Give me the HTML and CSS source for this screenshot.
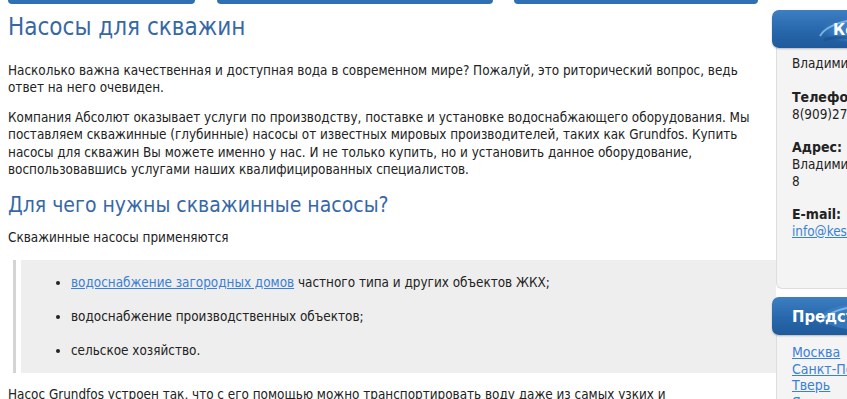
FILE: index.html
```html
<!DOCTYPE html>
<html lang="ru">
<head>
<meta charset="utf-8">
<title>Насосы для скважин</title>
<link rel="stylesheet" href="styles.css">
</head>
<body>
<div class="page">
  <main class="main">
    <nav class="tabs">
      <span class="tab tab-1"></span>
      <span class="tab tab-2"></span>
      <span class="tab tab-3"></span>
    </nav>
    <h1 class="title">Насосы для скважин</h1>
    <p class="text">Насколько важна качественная и доступная вода в современном мире? Пожалуй, это риторический вопрос, ведь ответ на него очевиден.</p>
    <p class="text">Компания Абсолют оказывает услуги по производству, поставке и установке водоснабжающего оборудования. Мы поставляем скважинные (глубинные) насосы от известных мировых производителей, таких как Grundfos. Купить насосы для скважин Вы можете именно у нас. И не только купить, но и установить данное оборудование, воспользовавшись услугами наших квалифицированных специалистов.</p>
    <h2 class="subtitle">Для чего нужны скважинные насосы?</h2>
    <p class="text">Скважинные насосы применяются</p>
    <blockquote class="quote">
      <ul class="quote-list">
        <li><a href="#" class="link">водоснабжение загородных домов</a> частного типа и других объектов ЖКХ;</li>
        <li>водоснабжение производственных объектов;</li>
        <li>сельское хозяйство.</li>
      </ul>
    </blockquote>
    <p class="text">Насос Grundfos устроен так, что с его помощью можно транспортировать воду даже из самых узких и труднодоступных скважин.</p>
  </main>
  <aside class="sidebar">
    <section class="widget">
      <div class="widget-head">
        <svg class="swoosh" width="90" height="38" viewBox="0 0 90 38" aria-hidden="true">
          <defs>
            <radialGradient id="sw1" cx="0.55" cy="0.5" r="0.6">
              <stop offset="0" stop-color="#2a6cb0"/>
              <stop offset="0.6" stop-color="#3f86c8"/>
              <stop offset="1" stop-color="#2a6cb0" stop-opacity="0"/>
            </radialGradient>
          </defs>
          <ellipse cx="52" cy="20" rx="40" ry="13" fill="url(#sw1)"/>
          <path d="M10 26 C 20 8, 70 4, 92 12" stroke="#8fc0ea" stroke-width="2" fill="none" opacity="0.8"/>
          <path d="M14 30 C 30 24, 60 30, 92 26" stroke="#1a4f8c" stroke-width="3" fill="none" opacity="0.6"/>
        </svg>
        <span class="widget-title widget-title-contacts">Контакты</span>
      </div>
      <div class="widget-body contacts">
        <p class="info">Владимир</p>
        <p class="info"><b class="label">Телефон:</b><br>8(909)270-00-00</p>
        <p class="info"><b class="label">Адрес:</b><br>Владимир, ул. Большая,<br>8</p>
        <p class="info"><b class="label">E-mail:</b><br><a href="#" class="link">info@kesson.ru</a></p>
      </div>
    </section>
    <section class="widget widget-2">
      <div class="widget-head">
        <svg class="swoosh" width="90" height="38" viewBox="0 0 90 38" aria-hidden="true">
          <ellipse cx="52" cy="20" rx="40" ry="13" fill="#3f86c8" opacity="0.6"/>
          <path d="M10 26 C 20 8, 70 4, 92 12" stroke="#8fc0ea" stroke-width="2" fill="none" opacity="0.8"/>
        </svg>
        <span class="widget-title">Представительства</span>
      </div>
      <div class="widget-body links">
        <a href="#" class="link">Москва</a>
        <a href="#" class="link">Санкт-Петербург</a>
        <a href="#" class="link">Тверь</a>
        <a href="#" class="link">Ярославль</a>
      </div>
    </section>
  </aside>
</div>
</body>
</html>
```

FILE: styles.css
```css
html, body {
  margin: 0;
  padding: 0;
  overflow: hidden;
  background: #ffffff;
}

body {
  font-family: "DejaVu Sans Condensed", "DejaVu Sans", sans-serif;
  font-size: 13.4px;
  color: #222222;
}

.page {
  display: flex;
  align-items: flex-start;
  width: 1100px;
}

.main {
  width: 768px;
  padding-left: 8px;
  flex: none;
}

.tabs {
  display: flex;
  height: 4px;
}

.tab {
  display: block;
  height: 4px;
  background: #2f6fb3;
  border-radius: 0 0 4px 4px;
}

.tab-1 { width: 187px; }
.tab-2 { width: 276px; margin-left: 22px; }
.tab-3 { width: 244px; margin-left: 21px; }

.title {
  margin: 8px 0 0;
  font-size: 24px;
  line-height: 30px;
  font-weight: normal;
  color: #3768a6;
}

.subtitle {
  margin: 14px 0 0;
  font-size: 21px;
  line-height: 26px;
  font-weight: normal;
  color: #3768a6;
}

.text {
  margin: 21px 0 0;
  line-height: 17.4px;
}

.title + .text { margin-top: 20px; }
.text + .text { margin-top: 12px; }
.subtitle + .text { margin-top: 11px; }

.quote {
  margin: 13px 0 0 5px;
  padding: 0 0 0 5px;
  border-left: 3px solid #d4d4d4;
}

.quote-list {
  margin: 0;
  padding: 14px 0 14px 50px;
  background: #eeeeee;
  list-style: disc;
}

.quote-list li {
  line-height: 17px;
}

.quote-list li + li {
  margin-top: 17px;
}

.quote + .text { margin-top: 13px; }

.link {
  color: #3a80d4;
  text-decoration: underline;
}

.sidebar {
  width: 220px;
  flex: none;
  margin-left: -4px;
  margin-top: 10px;
}

.widget-head {
  position: relative;
  height: 38px;
  border-radius: 7px;
  background: linear-gradient(180deg, #3d7fc2 0%, #2767ab 55%, #1f5a9b 100%);
  box-shadow: 0 1px 2px rgba(0, 0, 0, 0.25);
  display: flex;
  align-items: center;
  overflow: hidden;
}

.swoosh {
  position: absolute;
  left: 38px;
  top: 0;
}

.widget-title {
  position: relative;
  color: #ffffff;
  font-weight: bold;
  font-size: 16.5px;
  padding-left: 20px;
  white-space: nowrap;
}

.widget-title-contacts {
  padding-left: 61px;
}

.widget-body {
  margin-left: 4px;
  background: #f4f4f4;
  border-left: 1px solid #dddddd;
  border-bottom: 1px solid #dddddd;
  border-radius: 0 0 0 6px;
  padding: 6px 0 0 15px;
  line-height: 17px;
}

.contacts {
  padding-top: 7px;
  padding-bottom: 48px;
}

.info {
  margin: 0 0 16px;
}

.info:first-child {
  margin-bottom: 17px;
}

.info:last-child {
  margin-bottom: 0;
}

.label {
  font-size: 14px;
}

.widget-2 {
  margin-top: 8px;
}

.links {
  display: flex;
  flex-direction: column;
  padding-top: 9px;
  line-height: 16.5px;
  font-size: 14px;
}
```
